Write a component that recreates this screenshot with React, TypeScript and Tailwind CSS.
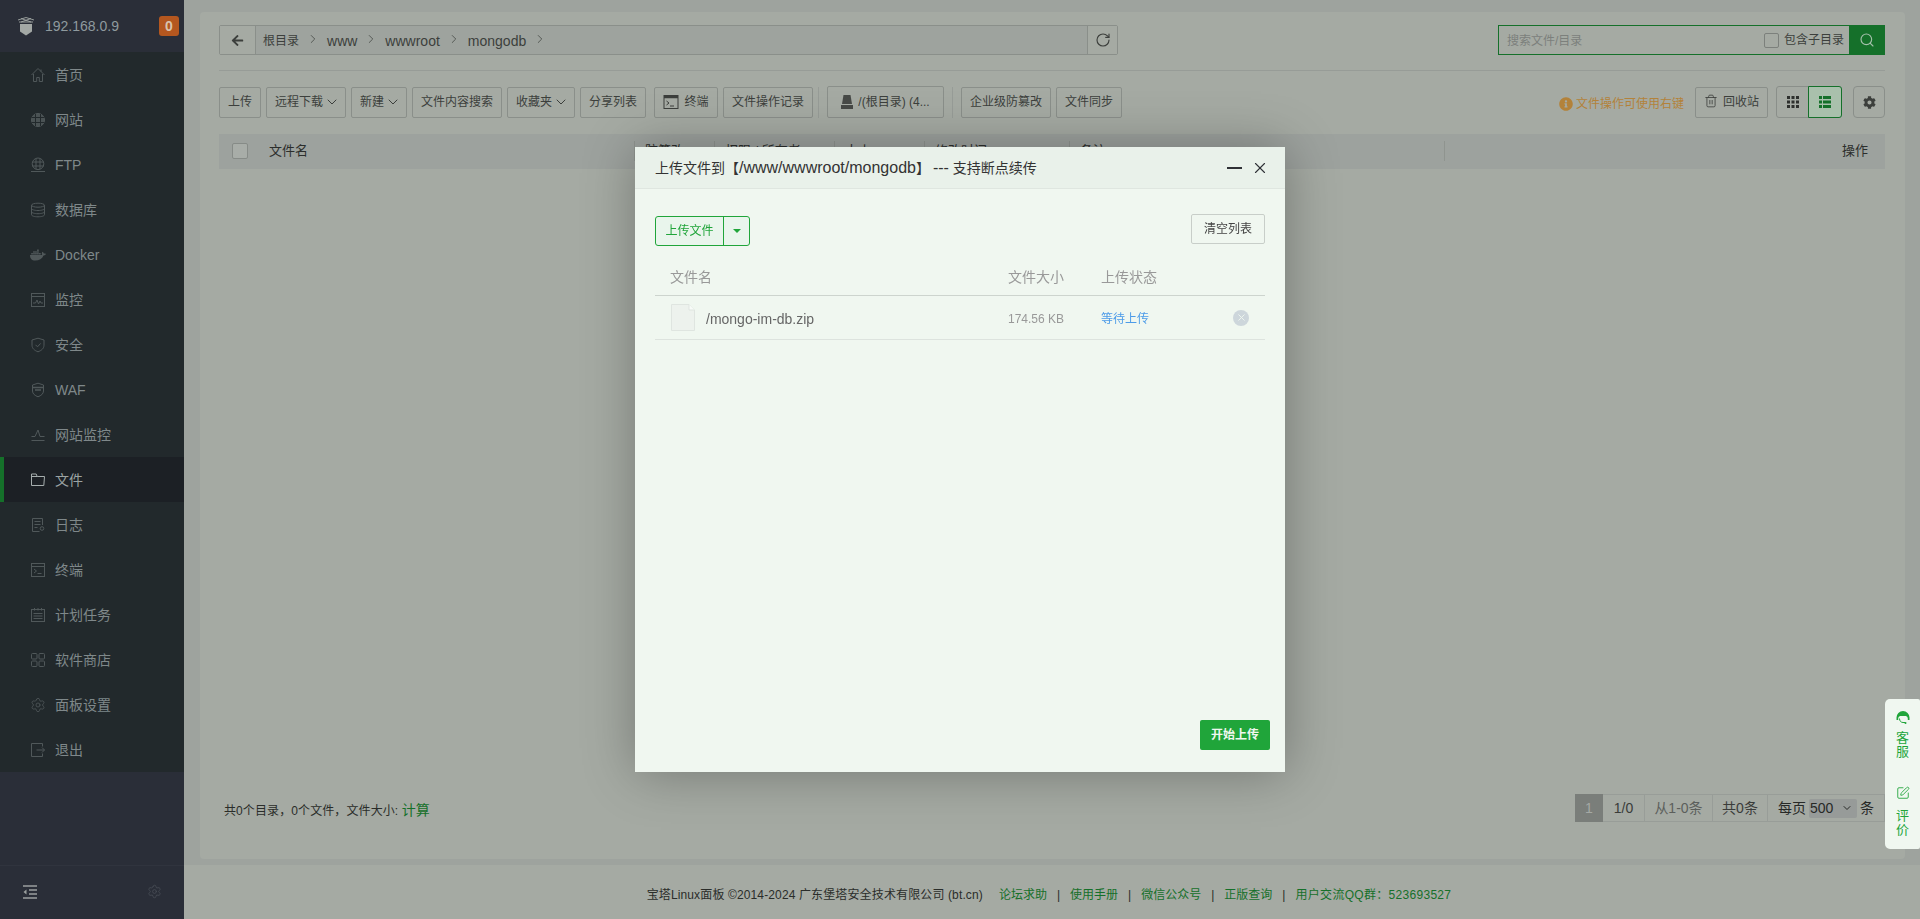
import { ChevronDown, ChevronRight, RotateCw, Search, Settings, SquarePen, Trash2, X } from 'lucide-react'
import { FaArrowLeft, FaCog, FaDocker, FaInfoCircle } from 'react-icons/fa'
import type { ReactNode } from 'react'

const I = ({ children, className = 'w-4 h-4' }: { children: ReactNode; className?: string }) => (
  <svg viewBox="0 0 16 16" fill="none" stroke="currentColor" strokeWidth="1" className={className}>
    {children}
  </svg>
)

const menu: { label: string; icon: ReactNode; active?: boolean }[] = [
  { label: '首页', icon: <I><path d="M1.5 8 8 1.5 14.5 8M3.5 7v7.5h3.2v-4h2.6v4h3.2V7M11 2.5v2.2" /></I> },
  { label: '网站', icon: <I><circle cx="8" cy="8" r="6.5" fill="#4a5254" /><path d="M1.5 5.5h13M1.5 10.5h13M5.5 2v12M10.5 2v12" stroke="#22292c" /></I> },
  { label: 'FTP', icon: <I><circle cx="8" cy="6.8" r="5.8" /><path d="M2.2 5h11.6M2.2 9h11.6M6 1.4v10.8M10 1.4v10.8M1 14.5h14" /></I> },
  { label: '数据库', icon: <I><ellipse cx="8" cy="3.2" rx="6.5" ry="2" /><path d="M1.5 3.2v9.6c0 1.1 2.9 2 6.5 2s6.5-.9 6.5-2V3.2M1.5 6.5c0 1.1 2.9 2 6.5 2s6.5-.9 6.5-2M1.5 9.7c0 1.1 2.9 2 6.5 2s6.5-.9 6.5-2" /></I> },
  { label: 'Docker', icon: <FaDocker className="w-4 h-4" /> },
  { label: '监控', icon: <I><rect x="1.5" y="1.5" width="13" height="13" /><path d="M1.5 4.5h13" /><path d="M3 11h2.5L7 8l1.5 4 1.5-3 1 2h2" /></I> },
  { label: '安全', icon: <I><path d="M8 1.2 14 3v5.2c0 3.2-2.6 5.4-6 6.6-3.4-1.2-6-3.4-6-6.6V3Z" /><path d="m5.5 7.8 2 2 3.2-3.4" /></I> },
  { label: 'WAF', icon: <I><path d="M8 1.2 13.5 3v6c0 2.8-2.4 4.6-5.5 5.8C4.900 13.600 2.500 11.800 2.500 9V3Z" /><path d="M2.500 5.500h11M5 8h6" strokeWidth="1.600" /></I> },
  { label: '网站监控', icon: <I><path d="M1.500 9.500h3.500L8 3l2 6.500h4.500M1.500 13.500h13" /></I> },
  { label: '文件', active: true, icon: <I><path d="M1.500 2h4.700l1 2.500H14.500L13.800 13.500H1.500Z" /><path d="M1.500 4.500h5.700" /></I> },
  { label: '日志', icon: <I><path d="M12.500 8V1.500h-10v13h7" /><path d="M4.500 4.500h6M4.500 7.500h6M4.500 10.500h3" /><circle cx="12" cy="11.500" r="1.800" /></I> },
  { label: '终端', icon: <I><rect x="1.500" y="1.500" width="13" height="13" /><path d="M1.500 4.500h13M4 7l2.500 2L4 11M7.500 11.500h4" /></I> },
  { label: '计划任务', icon: <I><rect x="1.500" y="2.500" width="13" height="12" /><path d="M4.500 1v2.500M8 1v2.500M11.500 1v2.500M3.500 6.500h9M3.500 9h9M3.500 11.500h9" /></I> },
  { label: '软件商店', icon: <I><rect x="1.500" y="1.500" width="5.500" height="5.500" rx="1" /><rect x="9" y="1.500" width="5.500" height="5.500" rx="1" /><rect x="1.500" y="9" width="5.500" height="5.500" rx="1" /><rect x="9" y="9" width="5.500" height="5.500" rx="1" /></I> },
  { label: '面板设置', icon: <Settings className="w-4 h-4" strokeWidth={1.2} /> },
  { label: '退出', icon: <I><path d="M12.500 4.500V1.500h-11v13h11v-3" /><path d="M6.500 8h8M12 5.500 14.500 8 12 10.500" /></I> },
]

const Btn = ({ children, className = '' }: { children: ReactNode; className?: string }) => (
  <div className={`h-[31px] flex items-center justify-center gap-1 border border-[#8a8f8a] rounded-[2px] text-[#3c3f3c] ${className}`}>
    {children}
  </div>
)

const Sep = ({ className = '' }: { className?: string }) => <div className={`w-px h-[31px] bg-[#979c97] ${className}`} />

const Caret = () => <ChevronDown className="w-[16px] h-[16px] -mx-[3px] -mt-[1px]" strokeWidth={1.500} />

const TermIcon = () => (
  <svg viewBox="0 0 16 16" className="w-4 h-4" fill="none" stroke="#3c3f3c" strokeWidth="1">
    <rect x="1" y="1.500" width="14" height="13" />
    <path d="M1 3h14" strokeWidth="2.500" />
    <path d="M3.500 7l2.500 2-2.500 2M7 12h4" />
  </svg>
)

const Sidebar = () => (
  <aside className="w-[184px] shrink-0 h-full flex flex-col bg-[#2a2e38]">
    <div className="h-[52px] flex items-center pl-[18px] pr-[5px]">
      <svg viewBox="0 0 16 20" className="w-4 h-5 mr-[11px]">
        <path d="M0 4 8 1.500 16 4M1 6h14M3 2.500l10 3.500M13 2.500 3 6" fill="none" stroke="#a3a8a5" strokeWidth="0.900" />
        <path d="M2 8h12v7.500L8 19.500 2 15.500Z" fill="#a3a8a5" />
      </svg>
      <span className="text-sm text-[#8f9a9e] flex-1">192.168.0.9</span>
      <span className="w-5 h-5 rounded-[3px] bg-[#b4571f] text-[#d9c3ae] text-sm font-bold flex items-center justify-center">0</span>
    </div>
    <nav className="bg-[#22292c] flex flex-col">
      {menu.map((m) => (
        <div key={m.label} className={`h-[45px] flex items-center gap-[9px] ${m.active ? 'bg-[#1c2025] border-l-4 border-[#15702a] pl-[26px] text-[#9ba3a3]' : 'pl-[30px] text-[#7f888a]'}`}>
          <span className={`w-4 flex justify-center ${m.active ? 'text-[#a6aeae]' : 'text-[#50585a]'}`}>{m.icon}</span>
          <span className="text-sm">{m.label}</span>
        </div>
      ))}
    </nav>
    <div className="flex-1" />
    <div className="h-[54px] border-t border-[#30343e] flex items-center justify-between pl-[23px] pr-[22px] pb-[2px]">
      <svg viewBox="0 0 14 14" className="w-[14px] h-[14px]" stroke="#9a9f9e" strokeWidth="1.400" fill="none">
        <path d="M0 1h14M6 5h8M6 9h8M0 13h14" />
        <path d="M3.500 4.500v5L0.500 7Z" fill="#9a9f9e" stroke="none" />
      </svg>
      <Settings className="w-[15px] h-[15px] text-[#494e56]" strokeWidth={1.3} />
    </div>
  </aside>
)

const Crumb = ({ label, cjk }: { label: string; cjk?: boolean }) => (
  <span className="flex items-center">
    <span className={cjk ? 'text-xs' : 'text-sm'}>{label}</span>
    <ChevronRight className="w-[14px] h-[14px] mx-[7px] -mt-[5px] text-[#4c504c]" strokeWidth={1.500} />
  </span>
)

const Toolbar = () => (
  <div className="mt-[15px] flex items-start text-xs">
    <div className="flex items-center gap-[5px]">
      <Btn className="w-[42px]">上传</Btn>
      <Btn className="w-[80px]">远程下载<Caret /></Btn>
      <Btn className="w-[56px]">新建<Caret /></Btn>
      <Btn className="w-[90px]">文件内容搜索</Btn>
      <Btn className="w-[68px]">收藏夹<Caret /></Btn>
      <Btn className="w-[66px]">分享列表</Btn>
      <Btn className="w-[64px] ml-[3px] gap-[5px]"><TermIcon />终端</Btn>
      <Btn className="w-[90px]">文件操作记录</Btn>
      <Sep className="ml-0" />
      <Btn className="w-[117px] ml-[3px] h-[32px] gap-[5px]">
        <svg viewBox="0 0 12 14" className="w-3 h-[14px]" fill="#474a47"><path d="M2.500 0h7L11 9H1Z" /><path d="M0 10h12v4H0Z" /></svg>
        /(根目录) (4...
      </Btn>
      <Sep className="ml-[3px]" />
      <Btn className="w-[90px] ml-[3px]">企业级防篡改</Btn>
      <Btn className="w-[66px]">文件同步</Btn>
    </div>
    <div className="ml-auto flex items-center text-xs">
      <span className="flex items-center gap-[3px] text-[#b3823a] mt-[3px] mr-[11px]">
        <FaInfoCircle className="w-[14px] h-[14px]" />
        文件操作可使用右键
      </span>
      <Btn className="w-[73px] gap-[5px]"><Trash2 className="w-[14px] h-[16px] -mt-[2px]" strokeWidth={1.400} />回收站</Btn>
      <div className="ml-2 w-[66px] h-[32px] flex border border-[#8a8f8a] rounded-[3px]">
        <div className="flex-1 flex items-center justify-center">
          <svg viewBox="0 0 12 12" className="w-3 h-3" fill="#2e302e">
            <path d="M0 0h3v3H0ZM4.500 0h3v3h-3ZM9 0h3v3H9ZM0 4.500h3v3H0ZM4.500 4.500h3v3h-3ZM9 4.500h3v3H9ZM0 9h3v3H0ZM4.500 9h3v3h-3ZM9 9h3v3H9Z" />
          </svg>
        </div>
        <div className="flex-1 -m-px flex items-center justify-center border border-[#15702a] rounded-r-[3px] bg-[#a9c0ac]">
          <svg viewBox="0 0 12 12" className="w-3 h-3" fill="#15702a">
            <path d="M0 0h3v3H0ZM4 0h8v3H4ZM0 4.500h3v3H0ZM4 4.500h8v3H4ZM0 9h3v3H0ZM4 9h8v3H4Z" />
          </svg>
        </div>
      </div>
      <div className="ml-[11px] w-[32px] h-[32px] flex items-center justify-center border border-[#8a8f8a] rounded-[4px]">
        <FaCog className="w-[13px] h-[13px] text-[#3c3f3c]" />
      </div>
    </div>
  </div>
)

const cols = [
  { label: '防篡改', w: 'w-[80px]' },
  { label: '权限 / 所有者', w: 'w-[120px]' },
  { label: '大小', w: 'w-[90px]' },
  { label: '修改时间', w: 'w-[145px]' },
  { label: '备注', w: 'w-[375px]' },
]

const FileTable = () => (
  <div className="mt-[16px] h-[35px] flex items-center bg-[#9da29e] text-[13px] text-[#2c2e2c] pb-[2px]">
    <div className="w-[415px] flex items-center pl-[13px]">
      <span className="w-4 h-4 border border-[#868b87] rounded-[2px] bg-[#a8ada8]" />
      <span className="ml-[21px]">文件名</span>
    </div>
    {cols.map((c) => (
      <div key={c.label} className={`${c.w} h-5 flex items-center pl-[10px] border-l border-[#8f948f]`}>{c.label}</div>
    ))}
    <div className="flex-1 h-5 flex items-center justify-end pr-[17px] border-l border-[#8f948f]">操作</div>
  </div>
)

const pages = [
  { label: '1/0', w: 'w-[42px]' },
  { label: '从1-0条', w: 'w-[68px]', dim: true },
  { label: '共0条', w: 'w-[55px]' },
]

const Pager = () => (
  <div className="flex items-center text-sm text-[#3a3c3a] h-[28px] border-y border-r border-[#989d98]">
    <div className="w-[28px] h-[28px] -my-px bg-[#7a7e7a] text-[#a5a9a5] flex items-center justify-center">1</div>
    {pages.map((p) => (
      <div key={p.label} className={`${p.w} h-full flex items-center justify-center border-r border-[#989d98] whitespace-nowrap ${p.dim ? 'text-[#5c5f5c]' : ''}`}>{p.label}</div>
    ))}
    <div className="flex-1 flex items-center pl-[10px] text-[#272927] w-[116px] whitespace-nowrap">
      每页
      <span className="ml-[3px] w-[48px] h-[19px] bg-[#979b99] rounded-[2px] flex items-center justify-between pl-[1px] pr-[4px]">
        500
        <ChevronDown className="w-3 h-3" strokeWidth={2} />
      </span>
      <span className="ml-[3px]">条</span>
    </div>
  </div>
)

const Footer = () => (
  <footer className="h-[54px] shrink-0 bg-[#a5aaa3] flex items-center justify-center text-xs text-[#2a2d2a] pr-[6px] pt-[6px]">
    <span className="tracking-[0.13px]">宝塔Linux面板 ©2014-2024 广东堡塔安全技术有限公司 (bt.cn)</span>
    <span className="ml-4 text-[#15702a]">论坛求助</span>
    <span className="mx-[10px]">|</span>
    <span className="text-[#15702a]">使用手册</span>
    <span className="mx-[10px]">|</span>
    <span className="text-[#15702a]">微信公众号</span>
    <span className="mx-[10px]">|</span>
    <span className="text-[#15702a]">正版查询</span>
    <span className="mx-[10px]">|</span>
    <span className="text-[#15702a] tracking-[0.3px]">用户交流QQ群：523693527</span>
  </footer>
)

const UploadDialog = () => (
  <div className="fixed left-[635px] top-[147px] w-[650px] h-[625px] bg-[#f0f7f0] shadow-[1px_1px_50px_rgba(0,0,0,0.3)] flex flex-col text-xs z-20">
    <div className="h-[42px] shrink-0 flex items-center pl-5 pr-4 bg-[#e9f1ea] border-b border-[#dfe6e0] text-sm text-[#333]">
      <span className="flex-1">上传文件到【<span className="text-base">/www/wwwroot/mongodb</span>】<span className="ml-[3px] text-base">---</span> 支持断点续传</span>
      <span className="w-[15px] h-[2px] bg-[#2f3136] mr-[9px]" />
      <X className="w-[18px] h-[18px] text-[#2f3136]" strokeWidth={1.500} />
    </div>
    <div className="flex-1 flex flex-col px-5">
      <div className="mt-[25px] flex items-start justify-between">
        <div className="mt-[2px] w-[95px] h-[30px] flex border border-[#20a53a] rounded-[3px] text-[#20a53a] bg-[#e9f5ec]">
          <span className="w-[68px] flex items-center justify-center border-r border-[#20a53a]">上传文件</span>
          <span className="flex-1 flex items-center justify-center">
            <span className="w-0 h-0 border-x-[4px] border-x-transparent border-t-[4px] border-t-[#20a53a]" />
          </span>
        </div>
        <div className="w-[74px] h-[30px] flex items-center justify-center border border-[#c8cec9] rounded-[2px] text-[#444]">清空列表</div>
      </div>
      <div className="mt-[15px] h-[35px] pb-[3px] flex items-center border-b border-[#cdd4ce] text-sm text-[#999]">
        <span className="ml-[15px] w-[338px]">文件名</span>
        <span className="w-[93px]">文件大小</span>
        <span>上传状态</span>
      </div>
      <div className="h-[44px] flex items-center border-b border-[#dde3de]">
        <svg viewBox="0 0 24 27" className="ml-[16px] w-6 h-[27px]" stroke="#dfe5e0" fill="#edf2ed">
          <path d="M.500.500H18L23.500 6v20.500H.500Z" />
          <path d="M18 .500V6h5.500" fill="#f8fbf8" />
        </svg>
        <span className="ml-[11px] w-[302px] pt-[2px] text-sm text-[#666]">/mongo-im-db.zip</span>
        <span className="w-[93px] pt-[2px] text-[#999]">174.56 KB</span>
        <span className="w-[132px] pt-[2px] text-[#4c9be8]">等待上传</span>
        <span className="w-4 h-4 rounded-full bg-[#cdd6db] flex items-center justify-center">
          <X className="w-[11px] h-[11px] text-[#f0f7f0]" strokeWidth={2} />
        </span>
      </div>
      <div className="flex-1" />
      <div className="flex justify-end pb-[22px]">
        <div className="mr-[-5px] w-[70px] h-[30px] flex items-center justify-center bg-[#20a53a] rounded-[2px] text-[#f0f7f0] font-bold">开始上传</div>
      </div>
    </div>
  </div>
)

const FloatTab = () => (
  <div className="fixed right-0 top-[699px] w-[35px] h-[150px] bg-[#f0f7f0] rounded-l-[5px] rounded-r-[2px] flex flex-col items-center pt-[12px] text-[#20a53a] text-[13px] leading-[14px] z-10">
    <svg viewBox="0 0 14 14" className="w-[14px] h-[14px]" fill="#20a53a">
      <path d="M7 0a6.500 6.500 0 0 1 6.500 6.500V9h-1.700V7.500A2.500 2.500 0 0 0 10 5H4a2.500 2.500 0 0 0-1.800 2.500V9H.500V6.500A6.500 6.500 0 0 1 7 0Z" />
      <path d="M3.500 7.500c0 2.500 1.500 4 3.500 4h2" fill="none" stroke="#20a53a" strokeWidth="1" />
      <circle cx="9.500" cy="12" r="1" />
    </svg>
    <span className="mt-[6px] w-[14px] text-center">客服</span>
    <SquarePen className="mt-[27px] w-[14px] h-[14px]" strokeWidth={1.500} />
    <span className="mt-[9px] w-[14px] text-center">评价</span>
  </div>
)

export default function App() {
  return (
    <div className="w-[1920px] h-[919px] overflow-hidden flex bg-[#9ea39e] font-['Liberation_Sans','Noto_Sans_CJK_SC',sans-serif]">
      <Sidebar />
      <div className="flex-1 h-full flex flex-col">
        <div className="flex-1 min-h-0 pt-3 pl-4 pr-[15px] pb-[6px] flex">
          <main className="flex-1 bg-[#a5aaa3] rounded-[4px] pl-[19px] pr-5 pt-[13px] pb-[37px] flex flex-col">
            <div className="flex items-center justify-between">
              <div className="w-[899px] h-[30px] flex items-stretch border border-[#8a8f8a] rounded-[2px] bg-[#9ea39e] text-[#3c3f3c]">
                <div className="w-[36px] flex items-center justify-center bg-[#a5aaa3] border-r border-[#8a8f8a]">
                  <FaArrowLeft className="w-[13px] h-[13px] text-[#3c3f3c]" />
                </div>
                <div className="flex-1 flex items-center pl-[7px] pt-[2px]">
                  <Crumb label="根目录" cjk />
                  <Crumb label="www" />
                  <Crumb label="wwwroot" />
                  <Crumb label="mongodb" />
                </div>
                <div className="w-[30px] flex items-center justify-center bg-[#a5aaa3] border-l border-[#8a8f8a]">
                  <RotateCw className="w-4 h-4 text-[#3c3f3c]" strokeWidth={1.700} />
                </div>
              </div>
              <div className="w-[387px] h-[30px] flex items-center border border-[#15702a] text-xs">
                <span className="flex-1 pl-2 pt-[2px] text-[#7c807c]">搜索文件/目录</span>
                <span className="w-[15px] h-[15px] border border-[#7c807c] rounded-[2px]" />
                <span className="ml-[5px] mr-[5px] text-[#3c3f3c]">包含子目录</span>
                <div className="w-[36px] h-[30px] -mr-px bg-[#15702a] flex items-center justify-center">
                  <Search className="w-4 h-4 text-[#a5c0ab]" strokeWidth={1.700} />
                </div>
              </div>
            </div>
            <div className="mt-[15px] h-px bg-[#979c97]" />
            <Toolbar />
            <FileTable />
            <div className="flex-1" />
            <div className="flex items-center justify-between">
              <div className="pl-[5px] pt-[3px] text-xs text-[#2a2d2a] tracking-[0.1px]">
                共0个目录，0个文件，文件大小: <span className="text-sm text-[#15702a]">计算</span>
              </div>
              <div className="w-[310px]"><Pager /></div>
            </div>
          </main>
        </div>
        <Footer />
      </div>
      <UploadDialog />
      <FloatTab />
    </div>
  )
}
